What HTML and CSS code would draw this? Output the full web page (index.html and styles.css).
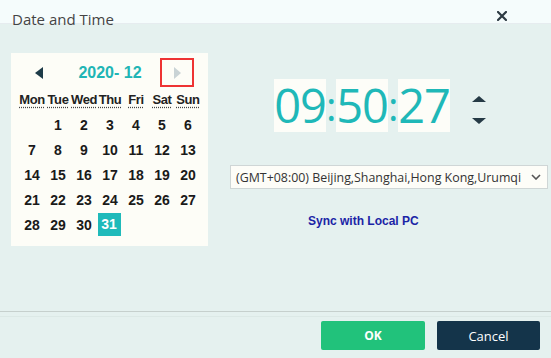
FILE: index.html
```html
<!DOCTYPE html>
<html lang="en">
<head>
    <meta charset="UTF-8">
    <meta name="viewport" content="width=device-width, initial-scale=1.0">
    <title>Date and Time</title>
    <link rel="stylesheet" href="styles.css">
</head>
<body>
    <div class="dialog">
        <header class="titlebar">
            <span class="title">Date and Time</span>
            <svg class="close" viewBox="0 0 10 10" width="10" height="10">
                <path d="M1,1 L9,9 M9,1 L1,9" stroke="#2e3b44" stroke-width="2.2" stroke-linecap="square"></path>
            </svg>
        </header>

        <main class="content">
            <!-- Calendar -->
            <div class="calendar">
                <div class="cal-nav">
                    <span class="nav-btn">
                        <svg viewBox="0 0 8 12" width="8" height="12"><polygon points="8,0 8,12 0,6" fill="#1d3b48"></polygon></svg>
                    </span>
                    <span class="cal-title">2020- 12</span>
                    <span class="nav-btn nav-next">
                        <svg viewBox="0 0 7 12" width="7" height="12"><polygon points="0,0 0,12 7,6" fill="#c9d3d5"></polygon></svg>
                    </span>
                </div>
                <div class="cal-grid">
                    <abbr class="wd" title="Monday">Mon</abbr>
                    <abbr class="wd" title="Tuesday">Tue</abbr>
                    <abbr class="wd" title="Wednesday">Wed</abbr>
                    <abbr class="wd" title="Thursday">Thu</abbr>
                    <abbr class="wd" title="Friday">Fri</abbr>
                    <abbr class="wd" title="Saturday">Sat</abbr>
                    <abbr class="wd" title="Sunday">Sun</abbr>

                    <span class="day"></span>
                    <span class="day">1</span><span class="day">2</span><span class="day">3</span><span class="day">4</span><span class="day">5</span><span class="day">6</span>
                    <span class="day">7</span><span class="day">8</span><span class="day">9</span><span class="day">10</span><span class="day">11</span><span class="day">12</span><span class="day">13</span>
                    <span class="day">14</span><span class="day">15</span><span class="day">16</span><span class="day">17</span><span class="day">18</span><span class="day">19</span><span class="day">20</span>
                    <span class="day">21</span><span class="day">22</span><span class="day">23</span><span class="day">24</span><span class="day">25</span><span class="day">26</span><span class="day">27</span>
                    <span class="day">28</span><span class="day">29</span><span class="day">30</span><span class="day"><b class="selected">31</b></span>
                </div>
            </div>

            <!-- Time and zone -->
            <div class="time-panel">
                <div class="clock">
                    <span class="digits">09</span><span class="colon">:</span><span class="digits">50</span><span class="colon">:</span><span class="digits">27</span>
                    <span class="spinner">
                        <svg viewBox="0 0 14 6" width="14" height="6"><polygon points="7,0 14,6 0,6" fill="#253a45"></polygon></svg>
                        <svg viewBox="0 0 14 6" width="14" height="6"><polygon points="0,0 14,0 7,6" fill="#253a45"></polygon></svg>
                    </span>
                </div>
                <div class="zone-select">
                    <span>(GMT+08:00) Beijing,Shanghai,Hong Kong,Urumqi</span>
                    <svg viewBox="0 0 10 6" width="10" height="6"><polyline points="1,1 5,5 9,1" fill="none" stroke="#555" stroke-width="1.6"></polyline></svg>
                </div>
                <a class="sync-link">Sync with Local PC</a>
            </div>
        </main>

        <footer class="footer">
            <div class="footer-bar">
                <button class="btn btn-ok">OK</button>
                <button class="btn btn-cancel">Cancel</button>
            </div>
        </footer>
    </div>
</body>
</html>
```

FILE: styles.css
```css
/* styles.css */
body {
    margin: 0;
    font-family: "Open Sans", "Liberation Sans", sans-serif;
    background: #e5f1ef;
}

.dialog {
    width: 551px;
    height: 358px;
    background: #e5f1ef;
    display: flex;
    flex-direction: column;
}

.titlebar {
    height: 24px;
    background: #f5fcfc;
    border-bottom: 1px solid #e6ecef;
    display: flex;
    justify-content: space-between;
    align-items: flex-end;
    padding: 0 44px 0 12px;
    box-sizing: border-box;
}

.title {
    font-size: 15px;
    color: #444;
    line-height: 20px;
    margin-bottom: -6px;
}

.close {
    margin-bottom: 2px;
}

.content {
    flex: 1;
    display: flex;
    padding: 29px 3px 0 11px;
}

/* calendar */
.calendar {
    width: 197px;
    height: 193px;
    background: #fdfdf7;
    font-family: "Liberation Sans", Arial, sans-serif;
}

.cal-nav {
    display: flex;
    align-items: center;
    padding: 5px 14px 0 11px;
    height: 29px;
}

.nav-btn {
    width: 34px;
    height: 29px;
    display: flex;
    align-items: center;
    justify-content: center;
    box-sizing: border-box;
}

.nav-next {
    border: 2px solid #ee3333;
}

.cal-title {
    flex: 1;
    text-align: center;
    color: #20b5b5;
    font-weight: bold;
    font-size: 16px;
    padding-left: 4px;
}

.cal-grid {
    display: grid;
    grid-template-columns: repeat(7, 26px);
    grid-auto-rows: 25px;
    padding-left: 8px;
}

.wd {
    font-size: 13px;
    font-weight: bold;
    color: #222;
    text-align: center;
    letter-spacing: -0.4px;
    line-height: 25px;
    text-decoration: underline dotted #444;
    text-underline-offset: 3px;
    white-space: nowrap;
}

.day {
    display: flex;
    align-items: center;
    justify-content: center;
    font-size: 14px;
    font-weight: bold;
    color: #1a1a1a;
}

.selected {
    width: 23px;
    height: 23px;
    line-height: 23px;
    text-align: center;
    background: #1fbaba;
    color: #fff;
    margin-right: 2px;
}

/* time */
.time-panel {
    margin-left: 22px;
    width: 318px;
}

.clock {
    display: flex;
    align-items: center;
    margin: 26px 0 0 44px;
    color: #1fb8b8;
}

.digits {
    background: #fdfdf8;
    font-size: 47px;
    line-height: 53px;
    width: 52px;
    text-align: center;
    letter-spacing: -1px;
}

.colon {
    font-size: 40px;
    line-height: 53px;
    width: 10px;
    text-align: center;
}

.spinner {
    display: flex;
    flex-direction: column;
    gap: 16px;
    margin-left: 22px;
    margin-top: 8px;
}

.zone-select {
    margin-top: 33px;
    height: 24px;
    background: #fdfdf8;
    border: 1px solid #cfd6d6;
    box-sizing: border-box;
    display: flex;
    align-items: center;
    justify-content: space-between;
    padding: 0 6px 0 5px;
    font-size: 12.4px;
    color: #333;
}

.sync-link {
    display: block;
    margin: 24px 0 0 78px;
    font-family: "Liberation Sans", Arial, sans-serif;
    font-size: 12px;
    font-weight: bold;
    color: #1b24a6;
    line-height: 16px;
}

/* footer */
.footer {
    border-top: 1px solid #c6d0cd;
    padding-top: 4px;
    height: 42px;
}

.footer-bar {
    border-top: 1px solid #dce9e6;
    padding: 4px 11px 0 0;
    display: flex;
    justify-content: flex-end;
    gap: 12px;
}

.btn {
    width: 104px;
    height: 29px;
    border: none;
    border-radius: 2px;
    color: #fff;
    font-family: "Open Sans", sans-serif;
    font-size: 13px;
}

.btn-ok {
    background: #21c27b;
    font-weight: bold;
    font-size: 12px;
}

.btn-cancel {
    background: #14344a;
    width: 103px;
}
```
